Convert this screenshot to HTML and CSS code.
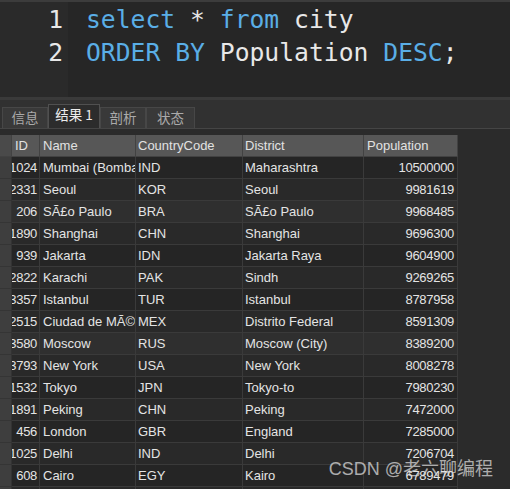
FILE: index.html
```html
<!DOCTYPE html>
<html>
<head>
<meta charset="utf-8">
<link rel="stylesheet" href="styles.css">
</head>
<body>
<div class="page">
  <div class="editor">
    <div class="gutter">
      <div class="ln">1</div>
      <div class="ln">2</div>
    </div>
    <div class="code">
      <div class="line"><span class="kw">select</span> * <span class="kw">from</span> city</div>
      <div class="line"><span class="kw">ORDER BY</span> Population <span class="kw">DESC</span>;</div>
    </div>
  </div>
  <div class="splitter"></div>
  <div class="tabbar">
    <div class="tab w46">信息</div>
    <div class="tab active">结果 1</div>
    <div class="tab w46">剖析</div>
    <div class="tab w49">状态</div>
  </div>
  <div class="grid">
    <div class="row head">
      <div class="c rh"></div>
      <div class="c id">ID</div>
      <div class="c name">Name</div>
      <div class="c cc">CountryCode</div>
      <div class="c dist">District</div>
      <div class="c pop">Population</div>
    </div>
    <div class="row"><div class="c rh"></div><div class="c id"><span>1024</span></div><div class="c name">Mumbai (Bombay)</div><div class="c cc">IND</div><div class="c dist">Maharashtra</div><div class="c pop num">10500000</div></div>
    <div class="row alt"><div class="c rh"></div><div class="c id"><span>2331</span></div><div class="c name">Seoul</div><div class="c cc">KOR</div><div class="c dist">Seoul</div><div class="c pop num">9981619</div></div>
    <div class="row hl"><div class="c rh"></div><div class="c id"><span>206</span></div><div class="c name">SÃ£o Paulo</div><div class="c cc">BRA</div><div class="c dist">SÃ£o Paulo</div><div class="c pop num">9968485</div></div>
    <div class="row alt"><div class="c rh"></div><div class="c id"><span>1890</span></div><div class="c name">Shanghai</div><div class="c cc">CHN</div><div class="c dist">Shanghai</div><div class="c pop num">9696300</div></div>
    <div class="row"><div class="c rh"></div><div class="c id"><span>939</span></div><div class="c name">Jakarta</div><div class="c cc">IDN</div><div class="c dist">Jakarta Raya</div><div class="c pop num">9604900</div></div>
    <div class="row alt"><div class="c rh"></div><div class="c id"><span>2822</span></div><div class="c name">Karachi</div><div class="c cc">PAK</div><div class="c dist">Sindh</div><div class="c pop num">9269265</div></div>
    <div class="row"><div class="c rh"></div><div class="c id"><span>3357</span></div><div class="c name">Istanbul</div><div class="c cc">TUR</div><div class="c dist">Istanbul</div><div class="c pop num">8787958</div></div>
    <div class="row alt"><div class="c rh"></div><div class="c id"><span>2515</span></div><div class="c name">Ciudad de MÃ©xico</div><div class="c cc">MEX</div><div class="c dist">Distrito Federal</div><div class="c pop num">8591309</div></div>
    <div class="row hl"><div class="c rh"></div><div class="c id"><span>3580</span></div><div class="c name">Moscow</div><div class="c cc">RUS</div><div class="c dist">Moscow (City)</div><div class="c pop num">8389200</div></div>
    <div class="row alt"><div class="c rh"></div><div class="c id"><span>3793</span></div><div class="c name">New York</div><div class="c cc">USA</div><div class="c dist">New York</div><div class="c pop num">8008278</div></div>
    <div class="row"><div class="c rh"></div><div class="c id"><span>1532</span></div><div class="c name">Tokyo</div><div class="c cc">JPN</div><div class="c dist">Tokyo-to</div><div class="c pop num">7980230</div></div>
    <div class="row alt"><div class="c rh"></div><div class="c id"><span>1891</span></div><div class="c name">Peking</div><div class="c cc">CHN</div><div class="c dist">Peking</div><div class="c pop num">7472000</div></div>
    <div class="row"><div class="c rh"></div><div class="c id"><span>456</span></div><div class="c name">London</div><div class="c cc">GBR</div><div class="c dist">England</div><div class="c pop num">7285000</div></div>
    <div class="row alt"><div class="c rh"></div><div class="c id"><span>1025</span></div><div class="c name">Delhi</div><div class="c cc">IND</div><div class="c dist">Delhi</div><div class="c pop num">7206704</div></div>
    <div class="row"><div class="c rh"></div><div class="c id"><span>608</span></div><div class="c name">Cairo</div><div class="c cc">EGY</div><div class="c dist">Kairo</div><div class="c pop num">6789479</div></div>
    <div class="row alt"><div class="c rh"></div><div class="c id"><span>1380</span></div><div class="c name">Teheran</div><div class="c cc">IRN</div><div class="c dist">Teheran</div><div class="c pop num">6758845</div></div>
  </div>
  <div class="watermark">CSDN @老六聊编程</div>
</div>
</body>
</html>
```
FILE: styles.css
```css
html, body {
  margin: 0;
  padding: 0;
  background: #2b2b2b;
}
.page {
  position: relative;
  width: 510px;
  height: 489px;
  overflow: hidden;
  background: #2b2b2b;
}
.editor {
  display: flex;
  height: 95px;
  border-top: 2px solid #3c3c3c;
  font-family: "DejaVu Sans Mono", monospace;
  font-size: 24.7px;
  line-height: 33px;
}
.gutter {
  width: 68px;
  box-sizing: border-box;
  background: #2a2a2a;
  padding: 1px 5px 0 0;
  text-align: right;
  color: #e8e8e8;
}
.code {
  flex: 1;
  background: #262626;
  padding: 1px 0 0 18px;
  color: #e8e8e8;
}
.line {
  white-space: pre;
}
.kw {
  color: #5aaee6;
}
.splitter {
  height: 3px;
  background: #3a3a3a;
}
.tabbar {
  display: flex;
  align-items: flex-end;
  height: 28px;
  padding-left: 2px;
  background: #313131;
  border-bottom: 1px solid #454545;
  font-family: "Noto Sans CJK SC", "Liberation Sans", sans-serif;
  font-size: 13.5px;
}
.tab {
  box-sizing: border-box;
  height: 21px;
  display: flex;
  align-items: center;
  justify-content: center;
  background: #393939;
  border: 1px solid #474747;
  border-bottom: none;
  color: #aaaaaa;
  line-height: 1;
}
.w46 { width: 46px; }
.w49 { width: 49px; }
.tab.active {
  width: 52px;
  height: 24px;
  background: #2c2c2c;
  border-color: #505050;
  color: #ececec;
  padding-bottom: 3px;
}
.grid {
  width: 458px;
  margin-top: 6px;
  font-family: "Liberation Sans", Arial, sans-serif;
  font-size: 13px;
  color: #e4e4e4;
}
.row {
  display: flex;
  height: 22px;
  background: #252525;
}
.row.alt { background: #292929; }
.row.hl { background: #2f2f2f; }
.c {
  box-sizing: border-box;
  height: 22px;
  line-height: 21px;
  padding: 0 3px;
  border-right: 1px solid #3a3a3a;
  border-bottom: 1px solid #3a3a3a;
  white-space: nowrap;
  overflow: hidden;
}
.rh {
  width: 12px;
  padding: 0;
  background: #3e3e3e;
  border-bottom-color: #353535;
  border-right-color: #333;
}
.id {
  width: 28px;
  padding-right: 2px;
  display: flex;
  justify-content: flex-end;
  letter-spacing: -0.3px;
}
.head .id { justify-content: flex-start; letter-spacing: 0; }
.name { width: 96px; padding-right: 0; }
.cc { width: 107px; padding-left: 2px; }
.dist { width: 121px; padding-left: 2px; }
.pop { width: 94px; }
.num { text-align: right; letter-spacing: -0.3px; }
.row.head {
  background: #575757;
  color: #e2e2e2;
}
.head .c {
  border-right-color: #424242;
  border-bottom-color: #424242;
}
.head .rh {
  background: #4a4a4a;
}
.watermark {
  position: absolute;
  right: 17px;
  top: 459px;
  font-family: "Liberation Sans", "Noto Sans CJK SC", sans-serif;
  font-size: 18px;
  line-height: 20px;
  color: rgba(225, 225, 225, 0.72);
  white-space: nowrap;
}
```
